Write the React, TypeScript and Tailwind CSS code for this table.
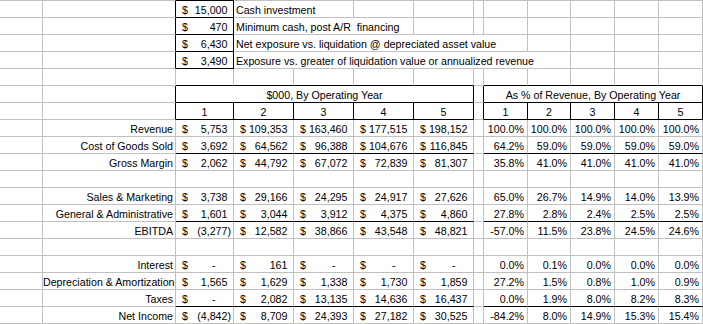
import type { ReactNode } from "react";

const rG = "border-r border-r-[#c0c0c0]";
const rK = "border-r border-r-black";
const bG = "border-b border-b-[#c0c0c0]";
const bK = "border-b border-b-black";

type CellProps = {
  w: string;
  r?: string;
  b?: string;
  t?: string;
  className?: string;
  children?: ReactNode;
};

function Cell({ w, r = rG, b = bG, t = "", className = "", children }: CellProps) {
  return (
    <div className={`${t ? "h-[18px]" : "h-[17px]"} shrink-0 ${w} ${r} ${b} ${t} ${className}`}>
      <div className="leading-[18px] whitespace-nowrap">{children}</div>
    </div>
  );
}

function Acc({ v }: { v: string }) {
  const neg = v.startsWith("(");
  const dash = v === "-";
  return (
    <div className="flex justify-between pl-[6px] pr-[2px]">
      <span>$</span>
      <span>
        {v}
        {dash ? <span className="invisible">00)</span> : !neg && <span className="invisible">)</span>}
      </span>
    </div>
  );
}

const yearW = ["w-[58px]", "w-[60px]", "w-[60px]", "w-[60px]", "w-[60px]"];
const pctW = ["w-[44px]", "w-[43px]", "w-[44px]", "w-[44px]", "w-[44px]"];

function DataRow({ label, vals, pcts, line }: { label?: string; vals?: string[]; pcts?: string[]; line?: boolean }) {
  const b = line ? bK : bG;
  return (
    <div className="flex">
      <Cell w="w-[43px]" />
      <Cell w="w-[133px]" className="text-right pr-[2px]">
        {label}
      </Cell>
      {yearW.map((w, i) => (
        <Cell key={i} w={w} b={b}>
          {vals && <Acc v={vals[i]} />}
        </Cell>
      ))}
      <Cell w="w-[10px]" />
      {pctW.map((w, i) => (
        <Cell key={i} w={w} b={b} className="text-right pr-[3px]">
          {pcts && pcts[i]}
        </Cell>
      ))}
    </div>
  );
}

const rows = [
  { label: "Revenue", vals: ["5,753", "109,353", "163,460", "177,515", "198,152"], pcts: ["100.0%", "100.0%", "100.0%", "100.0%", "100.0%"] },
  { label: "Cost of Goods Sold", vals: ["3,692", "64,562", "96,388", "104,676", "116,845"], pcts: ["64.2%", "59.0%", "59.0%", "59.0%", "59.0%"], line: true },
  { label: "Gross Margin", vals: ["2,062", "44,792", "67,072", "72,839", "81,307"], pcts: ["35.8%", "41.0%", "41.0%", "41.0%", "41.0%"] },
  {},
  { label: "Sales & Marketing", vals: ["3,738", "29,166", "24,295", "24,917", "27,626"], pcts: ["65.0%", "26.7%", "14.9%", "14.0%", "13.9%"] },
  { label: "General & Administrative", vals: ["1,601", "3,044", "3,912", "4,375", "4,860"], pcts: ["27.8%", "2.8%", "2.4%", "2.5%", "2.5%"], line: true },
  { label: "EBITDA", vals: ["(3,277)", "12,582", "38,866", "43,548", "48,821"], pcts: ["-57.0%", "11.5%", "23.8%", "24.5%", "24.6%"] },
  {},
  { label: "Interest", vals: ["-", "161", "-", "-", "-"], pcts: ["0.0%", "0.1%", "0.0%", "0.0%", "0.0%"] },
  { label: "Depreciation & Amortization", vals: ["1,565", "1,629", "1,338", "1,730", "1,859"], pcts: ["27.2%", "1.5%", "0.8%", "1.0%", "0.9%"] },
  { label: "Taxes", vals: ["-", "2,082", "13,135", "14,636", "16,437"], pcts: ["0.0%", "1.9%", "8.0%", "8.2%", "8.3%"], line: true },
  { label: "Net Income", vals: ["(4,842)", "8,709", "24,393", "27,182", "30,525"], pcts: ["-84.2%", "8.0%", "14.9%", "15.3%", "15.4%"] },
];

export default function App() {
  const tg = "border-t border-t-[#c0c0c0]";
  return (
    <div className="w-[703px] h-[324px] bg-white text-black font-['Liberation_Sans',Arial,sans-serif] text-[10.67px] overflow-hidden">
      {/* assumptions box */}
      <div className="flex">
        <Cell w="w-[43px]" t={tg} />
        <Cell w="w-[133px]" r={rK} t={tg} />
        <Cell w="w-[58px]" r={rK} b={bK} t="border-t border-t-black">
          <Acc v="15,000" />
        </Cell>
        <Cell w="w-[120px]" t={tg} className="pl-[2px]">
          Cash investment
        </Cell>
        <Cell w="w-[60px]" t={tg} />
        <Cell w="w-[60px]" t={tg} />
        <Cell w="w-[10px]" t={tg} />
        {pctW.map((w, i) => (
          <Cell key={i} w={w} t={tg} />
        ))}
      </div>
      <div className="flex">
        <Cell w="w-[43px]" />
        <Cell w="w-[133px]" r={rK} />
        <Cell w="w-[58px]" r={rK} b={bK}>
          <Acc v="470" />
        </Cell>
        <Cell w="w-[180px]" className="pl-[2px]">
          Minimum cash, post A/R&nbsp; financing
        </Cell>
        <Cell w="w-[60px]" />
        <Cell w="w-[10px]" />
        {pctW.map((w, i) => (
          <Cell key={i} w={w} />
        ))}
      </div>
      <div className="flex">
        <Cell w="w-[43px]" />
        <Cell w="w-[133px]" r={rK} />
        <Cell w="w-[58px]" r={rK} b={bK}>
          <Acc v="6,430" />
        </Cell>
        <Cell w="w-[294px]" className="pl-[2px]">
          Net exposure vs. liquidation @ depreciated asset value
        </Cell>
        {pctW.slice(1).map((w, i) => (
          <Cell key={i} w={w} />
        ))}
      </div>
      <div className="flex">
        <Cell w="w-[43px]" />
        <Cell w="w-[133px]" r={rK} />
        <Cell w="w-[58px]" r={rK} b={bK}>
          <Acc v="3,490" />
        </Cell>
        <Cell w="w-[337px]" className="pl-[2px]">
          Exposure vs. greater of liquidation value or annualized revenue
        </Cell>
        {pctW.slice(2).map((w, i) => (
          <Cell key={i} w={w} />
        ))}
      </div>
      {/* blank row above headers */}
      <div className="flex">
        <Cell w="w-[43px]" />
        <Cell w="w-[133px]" />
        {yearW.map((w, i) => (
          <Cell key={i} w={w} b={bK} />
        ))}
        <Cell w="w-[10px]" />
        {pctW.map((w, i) => (
          <Cell key={i} w={w} b={bK} />
        ))}
      </div>
      {/* group headers */}
      <div className="flex">
        <Cell w="w-[43px]" />
        <Cell w="w-[133px]" r={rK} />
        <Cell w="w-[298px]" r={rK} b={bK} className="text-center">
          $000, By Operating Year
        </Cell>
        <Cell w="w-[10px]" r={rK} />
        <Cell w="w-[219px]" r={rK} b={bK} className="text-center">
          As % of Revenue, By Operating Year
        </Cell>
      </div>
      {/* year numbers */}
      <div className="flex">
        <Cell w="w-[43px]" />
        <Cell w="w-[133px]" r={rK} />
        {yearW.map((w, i) => (
          <Cell key={i} w={w} r={rK} b={bK} className="text-center">
            {i + 1}
          </Cell>
        ))}
        <Cell w="w-[10px]" r={rK} />
        {pctW.map((w, i) => (
          <Cell key={i} w={w} r={rK} b={bK} className="text-center">
            {i + 1}
          </Cell>
        ))}
      </div>
      {rows.map((row, i) => (
        <DataRow key={i} {...row} />
      ))}
    </div>
  );
}
